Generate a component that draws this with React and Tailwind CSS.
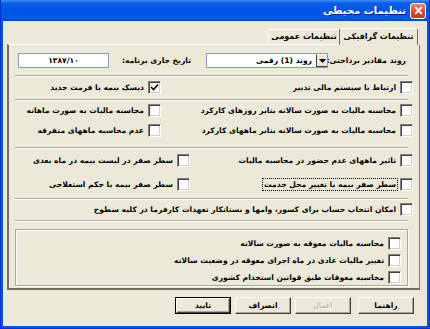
import React from 'react';

const font = "font-['Tahoma','DejaVu_Sans',sans-serif]";

function Check({ checked }) {
  return (
    <span className="w-[13px] h-[13px] shrink-0 bg-white border-t border-l border-[#808080] border-b border-b-white border-r border-r-white shadow-[inset_1px_1px_0_#404040,inset_-1px_-1px_0_#d4d0c8] flex items-center justify-center">
      {checked && (
        <svg width="9" height="9" viewBox="0 0 9 9">
          <path d="M1 4 L3.5 6.5 L8 1.5" stroke="#000" strokeWidth="1.6" fill="none" />
        </svg>
      )}
    </span>
  );
}

function Opt({ label, checked, focus, className = '' }) {
  return (
    <div className={`flex items-center gap-[3px] h-[14px] ${className}`}>
      <Check checked={checked} />
      <span className={`whitespace-nowrap leading-[11px] px-[1px] ${focus ? 'outline outline-1 outline-dotted outline-black' : ''}`}>
        {label}
      </span>
    </div>
  );
}

function Sep({ className = '' }) {
  return <div className={`h-[2px] shrink-0 border-t border-[#aca899] border-b border-b-white ml-[6px] mr-[11px] ${className}`} />;
}

function Btn({ label, disabled, def, className = '' }) {
  return (
    <div className={`w-[56px] h-[17px] ${def ? 'border border-black' : ''} ${className}`}>
      <div className="w-full h-full bg-[#ece9d8] border-t border-l border-white border-b border-b-[#404040] border-r border-r-[#404040] shadow-[inset_-1px_-1px_0_#aca899] flex items-center justify-center">
        <span className={disabled ? 'text-[#aca899] [text-shadow:1px_1px_0_#fff] font-normal' : ''}>{label}</span>
      </div>
    </div>
  );
}

export default function App() {
  return (
    <div dir="rtl" className={`w-[430px] h-[329px] flex flex-col bg-[#0054e3] border-x border-b border-[#0831d9] text-[7.6px] font-bold text-black ${font}`}>
      {/* title bar */}
      <div className="h-[21px] shrink-0 flex items-center bg-[linear-gradient(180deg,#3d8cf7_0%,#0a5fe8_15%,#0054e3_50%,#0059ec_85%,#0048d6_100%)] pr-[3px]">
        <div className="w-[16px] h-[16px] rounded-[3px] border border-white bg-[linear-gradient(180deg,#e9876b,#d6492a_60%,#c73a1c)] flex items-center justify-center">
          <svg width="9" height="9" viewBox="0 0 9 9">
            <path d="M1.2 1.2 L7.8 7.8 M7.8 1.2 L1.2 7.8" stroke="#fff" strokeWidth="1.8" />
          </svg>
        </div>
        <span className="mr-[4px] text-white text-[10px] whitespace-nowrap [text-shadow:1px_1px_0_#0a1e8c]">تنظیمات محیطی</span>
      </div>

      {/* body */}
      <div className="flex-1 mx-[2px] mb-[2px] bg-[#ece9d8] flex flex-col">
        {/* tabs */}
        <div className="flex items-end h-[23px] pr-[9px] text-[8px]">
          <div className="w-[79px] h-[17px] bg-[#ece9d8] border-t border-white border-r border-r-[#716f64] border-l border-l-[#716f64] rounded-t-[2px] flex items-center justify-center whitespace-nowrap relative top-[1px] z-10">
            تنظیمات گرافیکی
          </div>
          <div className="w-[71px] h-[15px] bg-[#ece9d8] border-t border-white border-l border-l-white flex items-center justify-center whitespace-nowrap">
            تنظیمات عمومی
          </div>
        </div>

        {/* panel */}
        <div className="ml-[4px] mr-[7px] h-[246px] border-t border-white border-r border-r-[#808080] border-l-2 border-l-[#716f64] border-b-2 border-b-[#716f64] flex flex-col">
          {/* row 1 */}
          <div className="flex items-center h-[15px] mt-[8px] pr-[13px]">
            <span className="w-[78px] whitespace-nowrap">روند مقادیر برداختی:</span>
            <div className="w-[122px] h-[15px] bg-white border border-[#7f9db9] flex items-center">
              <div className="w-[11px] h-full bg-[#ece9d8] border-t border-l border-white border-b border-b-[#404040] border-l-[#404040] flex items-center justify-center">
                <svg width="7" height="4" viewBox="0 0 7 4"><path d="M0 0 H7 L3.5 4 Z" fill="#000" /></svg>
              </div>
              <span className="mr-[4px] whitespace-nowrap">روند (1) رقمی</span>
            </div>
            <span className="mr-[15px] w-[76px] whitespace-nowrap">تاریخ جاری برنامه:</span>
            <div className="w-[91px] h-[15px] bg-white border border-[#7f9db9] flex items-center justify-center mr-[6px]">
              ۱۳۸۷/۱۰
            </div>
          </div>

          <Sep className="mt-[7px]" />

          {/* row 2 */}
          <div className="flex items-center mt-[3px] pr-[6px]">
            <Opt className="w-[252px]" label="ارتباط با سیستم مالی تدبیر" />
            <Opt label="دیسک بیمه با فرمت جدید" checked />
          </div>

          <Sep className="mt-[5px]" />

          <div className="flex items-center mt-[2px] pr-[6px]">
            <Opt className="w-[252px]" label="محاسبه مالیات به صورت سالانه بنابر روزهای کارکرد" />
            <Opt label="محاسبه مالیات به صورت ماهانه" />
          </div>
          <div className="flex items-center mt-[6px] pr-[6px]">
            <Opt className="w-[252px]" label="محاسبه مالیات به صورت سالانه بنابر ماههای کارکرد" />
            <Opt label="عدم محاسبه ماههای متفرقه" />
          </div>

          <Sep className="mt-[10px]" />

          <div className="flex items-center mt-[4px] pr-[6px]">
            <Opt className="w-[223px]" label="تاثیر ماههای عدم حضور در محاسبه مالیات" />
            <Opt label="سطر صفر در لیست بیمه در ماه بعدی" />
          </div>
          <div className="flex items-center mt-[10px] pr-[6px]">
            <Opt className="w-[223px]" label="سطر صفر بیمه با تغییر محل خدمت" focus />
            <Opt label="سطر صفر بیمه با حکم استعلاجی" />
          </div>

          <Sep className="mt-[7px]" />

          <div className="flex items-center mt-[2px] pr-[6px]">
            <Opt label="امکان انتخاب حساب برای کسور، وامها و بستانکار تعهدات کارفرما در کلیه سطوح" />
          </div>

          <Sep className="mt-[4px]" />

          {/* group box */}
          <div className="mt-[7px] ml-[6px] mr-[11px] h-[57px] border border-[#aca899] shadow-[1px_1px_0_#fff,inset_1px_1px_0_#fff] flex flex-col pr-[6px] pt-[6px] gap-[3px]">
            <Opt label="محاسبه مالیات معوقه به صورت سالانه" />
            <Opt label="تغییر مالیات عادی در ماه اجرای معوقه در وضعیت سالانه" />
            <Opt label="محاسبه معوقات طبق قوانین استخدام کشوری" />
          </div>
        </div>

        {/* buttons */}
        <div className="flex mt-[7px] pr-[13px]">
          <Btn label="راهنما" />
          <Btn label="اعمال" disabled className="mr-[7px]" />
          <Btn label="انصراف" className="mr-[4px]" />
          <Btn label="تایید" def className="mr-[4px]" />
        </div>
      </div>
    </div>
  );
}
